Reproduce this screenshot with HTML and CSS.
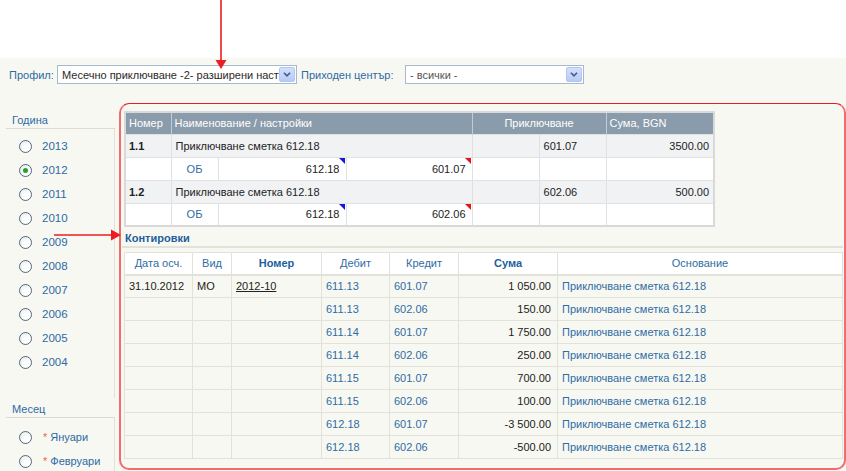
FILE: index.html
```html
<!DOCTYPE html>
<html lang="bg">
<head>
<meta charset="utf-8">
<title>Контировки</title>
<link rel="stylesheet" href="styles.css">
</head>
<body>
<div class="topbar"></div>
<div class="page">
  <div class="filters">
    <span class="flabel flabel-profile">Профил:</span>
    <div class="select select-profile">
      <span class="select-text">Месечно приключване -2- разширени наст</span>
      <span class="select-btn"><svg width="16" height="15" viewBox="0 0 16 15"><path d="M4.5 5.5 L8 9 L11.5 5.5" fill="none" stroke="#4a5f86" stroke-width="2"/></svg></span>
    </div>
    <span class="flabel flabel-center">Приходен център:</span>
    <div class="select select-center">
      <span class="select-text muted">- всички -</span>
      <span class="select-btn"><svg width="16" height="15" viewBox="0 0 16 15"><path d="M4.5 5.5 L8 9 L11.5 5.5" fill="none" stroke="#4a5f86" stroke-width="2"/></svg></span>
    </div>
  </div>

  <div class="main">
    <aside class="sidebar">
      <div class="side-head">Година</div>
      <ul class="radio-list years">
        <li><span class="radio"></span><span class="rlabel">2013</span></li>
        <li><span class="radio checked"></span><span class="rlabel">2012</span></li>
        <li><span class="radio"></span><span class="rlabel">2011</span></li>
        <li><span class="radio"></span><span class="rlabel">2010</span></li>
        <li><span class="radio"></span><span class="rlabel">2009</span></li>
        <li><span class="radio"></span><span class="rlabel">2008</span></li>
        <li><span class="radio"></span><span class="rlabel">2007</span></li>
        <li><span class="radio"></span><span class="rlabel">2006</span></li>
        <li><span class="radio"></span><span class="rlabel">2005</span></li>
        <li><span class="radio"></span><span class="rlabel">2004</span></li>
      </ul>
      <div class="side-head side-head-month">Месец</div>
      <ul class="radio-list months">
        <li><span class="radio"></span><span class="star">*</span><span class="rlabel">Януари</span></li>
        <li><span class="radio"></span><span class="star">*</span><span class="rlabel">Февруари</span></li>
      </ul>
    </aside>

    <section class="panel">
      <table class="settings">
        <colgroup>
          <col style="width:46px"><col style="width:47px"><col style="width:128px"><col style="width:126px"><col style="width:67px"><col style="width:67px"><col style="width:108px">
        </colgroup>
        <thead>
          <tr>
            <th>Номер</th>
            <th colspan="3">Наименование / настройки</th>
            <th colspan="2" class="center">Приключване</th>
            <th>Сума, BGN</th>
          </tr>
        </thead>
        <tbody>
          <tr class="main-row">
            <td class="num">1.1</td>
            <td colspan="3">Приключване сметка 612.18</td>
            <td></td>
            <td>601.07</td>
            <td class="right">3500.00</td>
          </tr>
          <tr class="sub-row">
            <td></td>
            <td class="center link">ОБ</td>
            <td class="right acc tri-blue">612.18</td>
            <td class="right acc tri-red">601.07</td>
            <td></td>
            <td></td>
            <td></td>
          </tr>
          <tr class="main-row">
            <td class="num">1.2</td>
            <td colspan="3">Приключване сметка 612.18</td>
            <td></td>
            <td>602.06</td>
            <td class="right">500.00</td>
          </tr>
          <tr class="sub-row">
            <td></td>
            <td class="center link">ОБ</td>
            <td class="right acc tri-blue">612.18</td>
            <td class="right acc tri-red">602.06</td>
            <td></td>
            <td></td>
            <td></td>
          </tr>
        </tbody>
      </table>

      <div class="section-title">Контировки</div>

      <table class="entries">
        <colgroup>
          <col style="width:68px"><col style="width:39px"><col style="width:90px"><col style="width:68px"><col style="width:69px"><col style="width:99px"><col style="width:285px">
        </colgroup>
        <thead>
          <tr>
            <th>Дата осч.</th>
            <th>Вид</th>
            <th class="strong">Номер</th>
            <th>Дебит</th>
            <th>Кредит</th>
            <th class="strong">Сума</th>
            <th>Основание</th>
          </tr>
        </thead>
        <tbody>
          <tr><td>31.10.2012</td><td>МО</td><td><span class="doc">2012-10</span></td><td class="link">611.13</td><td class="link">601.07</td><td class="right">1 050.00</td><td class="link">Приключване сметка 612.18</td></tr>
          <tr><td></td><td></td><td></td><td class="link">611.13</td><td class="link">602.06</td><td class="right">150.00</td><td class="link">Приключване сметка 612.18</td></tr>
          <tr><td></td><td></td><td></td><td class="link">611.14</td><td class="link">601.07</td><td class="right">1 750.00</td><td class="link">Приключване сметка 612.18</td></tr>
          <tr><td></td><td></td><td></td><td class="link">611.14</td><td class="link">602.06</td><td class="right">250.00</td><td class="link">Приключване сметка 612.18</td></tr>
          <tr><td></td><td></td><td></td><td class="link">611.15</td><td class="link">601.07</td><td class="right">700.00</td><td class="link">Приключване сметка 612.18</td></tr>
          <tr><td></td><td></td><td></td><td class="link">611.15</td><td class="link">602.06</td><td class="right">100.00</td><td class="link">Приключване сметка 612.18</td></tr>
          <tr><td></td><td></td><td></td><td class="link">612.18</td><td class="link">601.07</td><td class="right">-3 500.00</td><td class="link">Приключване сметка 612.18</td></tr>
          <tr><td></td><td></td><td></td><td class="link">612.18</td><td class="link">602.06</td><td class="right">-500.00</td><td class="link">Приключване сметка 612.18</td></tr>
        </tbody>
      </table>
    </section>
  </div>
</div>

<svg class="arrow arrow-down" width="14" height="70" viewBox="0 0 14 70">
  <line x1="7" y1="0" x2="7" y2="61" stroke="#ec1c24" stroke-width="1.6"/>
  <polygon points="1.5,60 12.5,60 7,69" fill="#ec1c24"/>
</svg>
<svg class="arrow arrow-right" width="70" height="14" viewBox="0 0 70 14">
  <line x1="0" y1="7" x2="59" y2="7" stroke="#ec1c24" stroke-width="1.6"/>
  <polygon points="57,1.5 57,12.5 67,7" fill="#ec1c24"/>
</svg>
</body>
</html>
```

FILE: styles.css
```css
* { box-sizing: border-box; }

html, body {
  margin: 0;
  padding: 0;
}

body {
  font-family: "Liberation Sans", Arial, sans-serif;
  font-size: 11px;
  color: #222;
  background: #fff;
  width: 846px;
  height: 471px;
  overflow: hidden;
  position: relative;
}

.topbar {
  height: 58px;
  background: #fff;
}

.page {
  background: #f8f8f2;
  height: 413px;
}

/* filters */
.filters {
  display: flex;
  align-items: center;
  padding: 7px 0 0 9px;
  height: 26px;
}

.flabel {
  color: #2c6aa5;
  white-space: nowrap;
}

.flabel-profile { width: 48px; }
.flabel-center { width: 104px; margin-left: 4px; }

.select {
  height: 19px;
  border: 1px solid #a7bacd;
  background: #fff;
  display: flex;
  align-items: center;
  padding-left: 4px;
  position: relative;
}

.select-profile { width: 240px; }
.select-center { width: 179px; }

.select-text {
  white-space: nowrap;
  color: #2a2a2a;
}

.select-text.muted { color: #555; }

.select-btn {
  position: absolute;
  right: 1px;
  top: 1px;
  width: 16px;
  height: 15px;
  border-radius: 2px;
  background: linear-gradient(#d3e0fd, #b7cbf7);
  border: 1px solid #b3c6ee;
  display: flex;
  align-items: center;
  justify-content: center;
}

.select-btn svg { display: block; }

/* main */
.main {
  display: flex;
  margin-top: 19px;
}

/* sidebar */
.sidebar {
  width: 109px;
  margin-left: 6px;
  flex: none;
}

.side-head {
  height: 26px;
  padding: 11px 0 0 6px;
  color: #2c6aa5;
  border-bottom: 1px solid #dedcd2;
}

.side-head-month {
  height: 20px;
  padding-top: 5px;
}

.radio-list {
  list-style: none;
  margin: 0;
  padding: 0;
}

.years {
  padding: 5px 0 24px;
  border-right: 1px solid #e2e0d8;
}

.months {
  padding-top: 7px;
  border-right: 1px solid #e2e0d8;
}

.radio-list li {
  height: 24px;
  display: flex;
  align-items: center;
  padding-left: 13px;
}

.radio {
  width: 13px;
  height: 13px;
  border-radius: 50%;
  border: 1px solid #4d6a86;
  background: radial-gradient(circle at 65% 65%, #ffffff 30%, #e3e3dc 100%);
  margin-right: 10px;
  position: relative;
  flex: none;
}

.radio.checked::after {
  content: "";
  position: absolute;
  left: 3px;
  top: 3px;
  width: 5px;
  height: 5px;
  border-radius: 50%;
  background: #27a127;
}

.rlabel {
  color: #2c6aa5;
  font-size: 11.5px;
}

.months .rlabel { font-size: 11px; }

.star {
  color: #f26a2a;
  font-size: 11px;
  margin-right: 3px;
  margin-left: 1px;
}

/* panel */
.panel {
  margin-left: 4px;
  width: 727px;
  height: 367px;
  border: 2px solid #f26c6c;
  border-top: 1px solid #e31e24;
  border-radius: 10px;
  padding: 7px 1px 0 3px;
}

table {
  border-collapse: collapse;
  table-layout: fixed;
  font-size: 11px;
}

/* settings table */
.settings {
  width: 589px;
  border: 2px solid #d9d9d9;
}

.settings th {
  background: #8a9bab;
  color: #fff;
  font-weight: normal;
  text-align: left;
  height: 22px;
  padding: 0 3px;
  border-left: 1px solid #c3ccd5;
  white-space: nowrap;
}

.settings th.center { text-align: center; }

.settings td {
  height: 23px;
  padding: 0 4px;
  border: 1px solid #e1e1e1;
  white-space: nowrap;
  position: relative;
}

.settings .main-row td { background: #f1f2f4; }
.settings .sub-row td { background: #fff; }

.settings td.num { font-weight: bold; padding-left: 3px; }
.settings td.acc { padding-right: 6px; }

.center { text-align: center; }
.right { text-align: right; }

.link { color: #2e6ca5; }

.tri-blue::after,
.tri-red::after {
  content: "";
  position: absolute;
  top: 0;
  right: 1px;
  border-style: solid;
  border-width: 0 6px 6px 0;
  border-color: transparent #1616d6 transparent transparent;
}

.tri-red::after {
  border-color: transparent #e4141c transparent transparent;
}

/* section title */
.section-title {
  margin-top: 2px;
  height: 19px;
  padding: 3px 0 0 3px;
  margin-left: -2px;
  font-weight: bold;
  color: #1d5f9d;
  border-bottom: 2px solid #e2e1da;
}

/* entries table */
.entries {
  width: 718px;
  margin-top: 4px;
}

.entries th {
  background: #fff;
  color: #2e6ca5;
  font-weight: normal;
  height: 22px;
  text-align: center;
  border: 1px solid #e2e1da;
  border-bottom: 2px solid #e2e1da;
  white-space: nowrap;
}

.entries th.strong {
  font-weight: bold;
  color: #1d5f9d;
}

.entries td {
  height: 23px;
  padding: 0 4px;
  border: 1px solid #e2e1da;
  white-space: nowrap;
}

.entries td.right { padding-right: 6px; color: #222; }

.doc {
  text-decoration: underline;
  color: #222;
}

/* annotation arrows */
.arrow {
  position: absolute;
  display: block;
}

.arrow-down {
  left: 214px;
  top: 0;
}

.arrow-right {
  left: 54px;
  top: 228px;
}
```
